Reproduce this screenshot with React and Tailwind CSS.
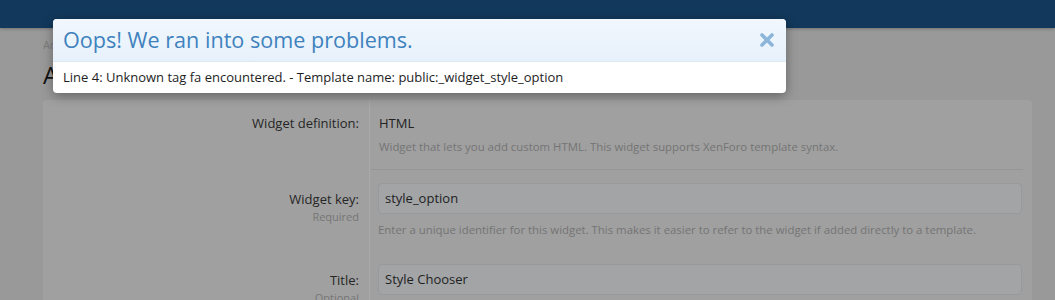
import React from 'react';

const font = { fontFamily: '"Open Sans", "Noto Sans", sans-serif' };

function CloseIcon() {
  return (
    <svg viewBox="0 0 16 16" className="w-[16px] h-[16px]" fill="none">
      <path d="M3 3 L13 13 M13 3 L3 13" stroke="#8cb5da" strokeWidth="3.6" strokeLinecap="round" />
    </svg>
  );
}

function FormRow({ label, hint, children, divider }) {
  return (
    <div className="grid grid-cols-[327px_1fr]">
      <div className="border-r border-[#a9a9a9] pr-[10px] text-right py-[13px]">
        {children.input ? <div className="h-[6px]" /> : null}
        <div className="text-[13px] leading-[21px] text-[#262626]">{label}</div>
        {hint && <div className="text-[11px] leading-[14px] text-[#767676]">{hint}</div>}
      </div>
      <div className={divider ? 'ml-[1px] mr-[9px] border-b border-[#969696]' : ''}>
        <div className="pl-[8px] pr-[10px] py-[13px]">{children.body}</div>
      </div>
    </div>
  );
}

export default function App() {
  return (
    <div className="relative w-full h-[300px] overflow-hidden bg-[#999999]" style={font}>
      {/* top navigation bar */}
      <div className="h-[28px] bg-[#12385b] shadow-[0_1px_3px_rgba(0,0,0,0.25)]" />

      {/* page behind the overlay */}
      <div className="pl-[43px] pr-[23px]">
        <div className="pt-[9px] text-[11px] leading-[16px] text-[#7c7c7c]">Admin control panel</div>
        <div className="mt-[7px] text-[24px] leading-[30px] text-[#121212]">Add widget</div>

        <div className="mt-[10px] rounded-[4px] bg-[#a0a0a0]">
          <FormRow label="Widget definition:" divider>
            {{
              body: (
                <div>
                  <div className="text-[13px] leading-[21px] text-[#222222]">HTML</div>
                  <div className="mt-[4px] text-[11.4px] leading-[18px] text-[#747474]">
                    Widget that lets you add custom HTML. This widget supports XenForo template syntax.
                  </div>
                </div>
              ),
            }}
          </FormRow>
          <FormRow label="Widget key:" hint="Required">
            {{
              input: true,
              body: (
                <div>
                  <div className="h-[31px] rounded-[4px] border border-[#979a9c] bg-[#a2a4a6] px-[6px] text-[13px] leading-[29px] text-[#1f1f1f]">
                    style_option
                  </div>
                  <div className="mt-[7px] text-[11.4px] leading-[17px] text-[#747474]">
                    Enter a unique identifier for this widget. This makes it easier to refer to the widget if added directly to a template.
                  </div>
                </div>
              ),
            }}
          </FormRow>
          <FormRow label="Title:" hint="Optional">
            {{
              input: true,
              body: (
                <div className="h-[31px] rounded-[4px] border border-[#979a9c] bg-[#a2a4a6] px-[6px] text-[13px] leading-[29px] text-[#1f1f1f]">
                  Style Chooser
                </div>
              ),
            }}
          </FormRow>
        </div>
      </div>

      {/* error overlay */}
      <div className="absolute left-[53px] top-[19px] w-[733px] rounded-[4px] bg-white shadow-[0_3px_12px_rgba(0,0,0,0.35)] overflow-hidden">
        <div className="flex h-[43px] items-center justify-between border-b border-[#dde8f3] bg-gradient-to-b from-[#f1f7fd] to-[#e7f1fb] pl-[10px] pr-[11px]">
          <div className="text-[21.6px] leading-[28px] text-[#3f82be]">Oops! We ran into some problems.</div>
          <CloseIcon />
        </div>
        <div className="h-[31px] px-[10px] pt-[6px] text-[13px] leading-[18px] text-[#1e1e1e]">
          Line 4: Unknown tag fa encountered. - Template name: public:_widget_style_option
        </div>
      </div>
    </div>
  );
}
